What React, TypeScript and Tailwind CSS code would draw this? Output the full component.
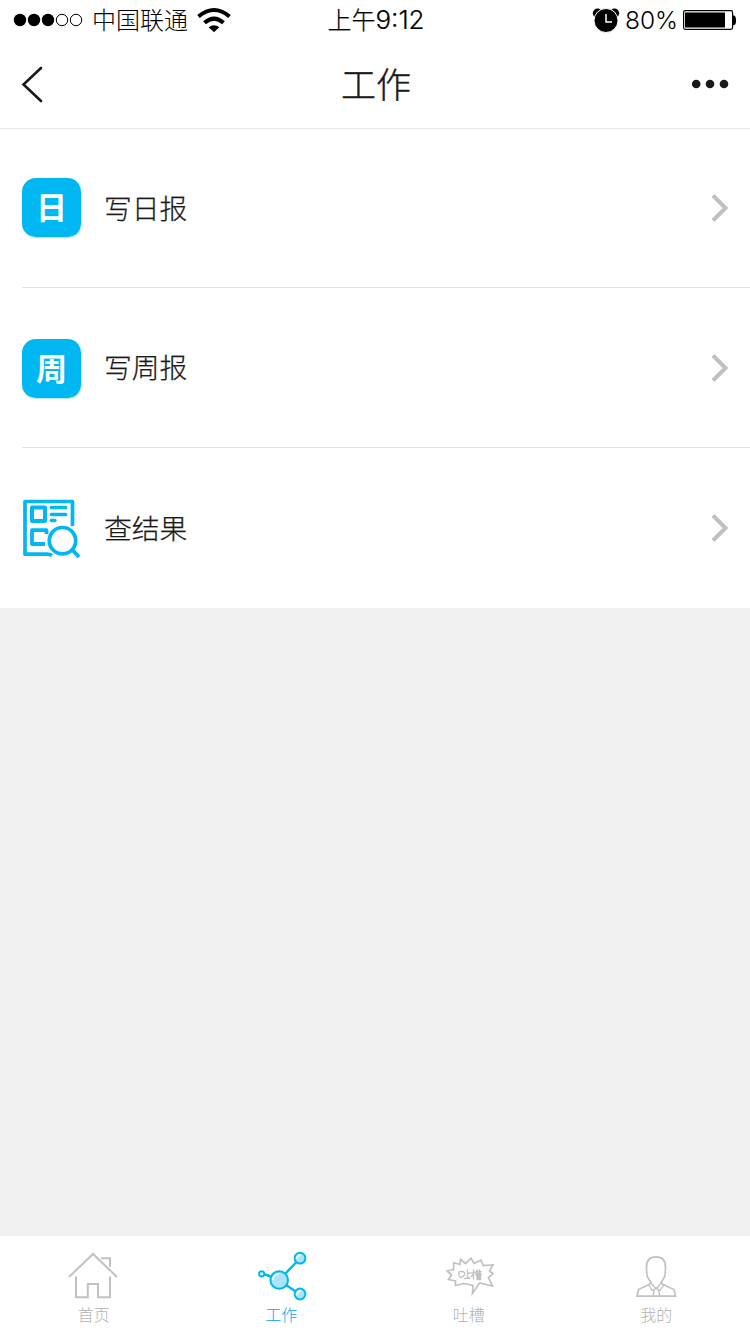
import React from 'react';

interface MenuItem {
  label: string;
  icon: React.ReactNode;
}

interface TabItem {
  label: string;
  icon: React.ReactNode;
  active?: boolean;
}

const CharIcon: React.FC<{ char: string; className?: string }> = ({ char, className = '' }) => (
  <div
    className={`flex h-[60px] w-[60px] items-center justify-center rounded-[14px] border-r border-b border-[#b5eafb] bg-[#00b7f1] bg-clip-padding pb-[4px] text-[31px] leading-none font-bold text-white ${className}`}
  >
    {char}
  </div>
);

const SearchResultIcon = () => (
  <svg width="60" height="62" viewBox="22 497 60 62" fill="none" stroke="#00b7f1">
    <path d="M72.500 526V501.500H25V554.200H47Q50 554.200 52 555.500" strokeWidth="3.700" strokeLinejoin="round" />
    <rect x="32" y="507.500" width="13" height="13.500" strokeWidth="4" strokeLinejoin="round" />
    <path d="M51.300 507.500H65.700M51.300 514.500H65.700M51.300 520.500H55" strokeWidth="3.400" strokeLinecap="round" />
    <path d="M46.500 534V530.200H32V544H45" strokeWidth="3.800" strokeLinejoin="round" />
    <circle cx="62.500" cy="540.700" r="13.200" strokeWidth="3.700" />
    <path d="M72 549.500L79 557" strokeWidth="4" />
  </svg>
);

const WifiIcon = () => (
  <svg width="34" height="26" viewBox="197 7 34 26" fill="none" stroke="#000">
    <path d="M198.500 16.500Q214 3.500 229.500 16.500" strokeWidth="4" />
    <path d="M204.500 22.800Q214 14.500 223.500 22.800" strokeWidth="4" />
    <path d="M208.700 27.200Q214 23.200 219.300 27.200L214 32.300Z" fill="#000" stroke="none" />
  </svg>
);

const AlarmIcon = () => (
  <svg width="28" height="26" viewBox="593 7 28 26">
    <circle cx="598.500" cy="13.200" r="4.700" />
    <circle cx="615.500" cy="13.200" r="4.700" />
    <circle cx="607" cy="20.500" r="12" stroke="#fff" strokeWidth="1" />
    <path d="M607 14V22H613" fill="none" stroke="#fff" strokeWidth="1.500" />
  </svg>
);

const BatteryIcon = () => (
  <svg width="54" height="20" viewBox="683 10 54 20">
    <rect x="683.600" y="10.600" width="49" height="18.800" rx="1.800" fill="#fff" stroke="#000" strokeWidth="1.200" />
    <rect x="685" y="12.500" width="40" height="15" />
    <path d="M733 15.500H734Q736 16 736 20.500T734 25H733Z" />
  </svg>
);

const HomeIcon = () => (
  <svg width="52" height="48" viewBox="68 1251 52 48" fill="none" stroke="#c1c1c1" strokeWidth="2">
    <path d="M69 1276L93 1253L117 1276" />
    <path d="M101 1257.200H110V1266" />
    <path d="M76 1275.500V1296.200H87.800V1283H98V1296.200H110V1275.500" />
  </svg>
);

const WorkIcon = () => (
  <svg width="50" height="50" viewBox="256 1251 50 50" fill="none" stroke="#00b7ee" strokeWidth="2" className="overflow-visible">
    <path d="M285 1274L296 1262.500M286 1285L295 1291M265 1274.500L271 1276.500" strokeWidth="2.400" />
    <circle cx="261.700" cy="1273.800" r="2.600" />
    <circle cx="279.200" cy="1280" r="8.800" fill="#a9e4fa" />
    <path d="M272.800 1280Q273.500 1274.500 279 1273.700" stroke="#fff" strokeWidth="1.500" />
    <circle cx="300" cy="1258.200" r="5.400" fill="#a9e4fa" />
    <path d="M296.500 1259Q297 1255.500 300.500 1255" stroke="#fff" strokeWidth="1.800" />
    <circle cx="300" cy="1294" r="5.400" fill="#a9e4fa" />
    <path d="M296.500 1295Q297 1291.500 300.500 1291" stroke="#fff" strokeWidth="1.800" />
  </svg>
);

const RoastIcon = () => (
  <svg width="50" height="42" viewBox="444 1255 50 42" fill="none" stroke="#c1c1c1" strokeWidth="1.700" className="overflow-visible">
    <path d="M447 1271L453.500 1269.500L453.800 1262.800L460 1264.500L460.500 1259.500L465.500 1263.500L471 1258.200L474 1263.500L481 1260.200L483.300 1265.500L493 1265L489.500 1271L493 1273.500L488.500 1278L492.500 1286L479.500 1283L472.500 1293.500L473 1285.500L464 1283.500L455.500 1285.500L455.500 1281L448.500 1279.500L451.500 1275Z" />
    <g strokeWidth="1.300" strokeLinecap="round">
      <path d="M459 1273.500Q458 1271 462 1271.500Q466 1272 464 1275.500Q461 1279 459 1276ZM467.500 1270V1278M467.500 1273.500L470 1273M464.500 1278.500L470 1278" />
      <path d="M471.500 1273L475 1272.500M473.500 1270V1279M473.500 1274L471.500 1276.500M476 1271.500H481M477 1270V1275M479.500 1270V1275M476 1273.500H481V1275H476ZM477 1276.500H480.500V1279.500H477ZM477 1278H480" />
    </g>
  </svg>
);

const ProfileIcon = () => (
  <svg width="42" height="44" viewBox="635 1254 42 44" fill="none" stroke="#c1c1c1" strokeWidth="1.700">
    <path d="M651.500 1283.500L647.500 1277Q646.500 1274 646.500 1267C646.500 1260 650.500 1256.800 656 1256.800S665.500 1260 665.500 1267Q665.500 1274 664.500 1277L660.500 1283.500" />
    <path d="M650 1284L638.500 1289.500L637 1296.200H675.500L674 1289.500L662 1284" />
    <path d="M650.500 1283L656.200 1288.500L661.500 1283L663.500 1285.500L660 1290.500L656.200 1288.500L652 1290.500L648.800 1285ZM654.500 1289L653 1296M658 1289L660 1296" strokeWidth="1.300" />
  </svg>
);

const Chevron = () => (
  <svg width="18" height="30" viewBox="711 193 18 30" fill="none" stroke="#c0c0c0" strokeWidth="4">
    <path d="M713 195.500L725.500 208L713 220.500" />
  </svg>
);

const menuItems: MenuItem[] = [
  { label: '写日报', icon: <CharIcon char="日" /> },
  { label: '写周报', icon: <CharIcon char="周" className="mt-[2px]" /> },
  { label: '查结果', icon: <SearchResultIcon /> },
];

const tabs: TabItem[] = [
  { label: '首页', icon: <HomeIcon /> },
  { label: '工作', icon: <WorkIcon />, active: true },
  { label: '吐槽', icon: <RoastIcon /> },
  { label: '我的', icon: <ProfileIcon /> },
];

const StatusBar = () => (
  <div className="grid h-10 grid-cols-[1fr_auto_1fr] items-center text-[24px] leading-none font-light text-black">
    <div className="flex items-center pl-[13px]">
      <svg width="70" height="14" viewBox="13 13 70 14">
        <circle cx="20" cy="20" r="6.200" />
        <circle cx="34" cy="20" r="6.200" />
        <circle cx="48" cy="20" r="6.200" />
        <circle cx="62" cy="20" r="5.700" fill="none" stroke="#000" />
        <circle cx="76" cy="20" r="5.700" fill="none" stroke="#000" />
      </svg>
      <span className="ml-[9px] pb-[2px]">中国联通</span>
      <div className="ml-[9px]">
        <WifiIcon />
      </div>
    </div>
    <div className="flex items-center pl-[2px]">
      <span className="pb-[2px] [-webkit-text-stroke:0.2px]">上午</span>
      <span className="font-['Inter'] text-[26px] font-light [-webkit-text-stroke:0.2px]">9:12</span>
    </div>
    <div className="flex items-center justify-end pr-[13px]">
      <AlarmIcon />
      <span className="mr-[5px] ml-[5px] font-['Inter'] text-[24.500px]">80%</span>
      <BatteryIcon />
    </div>
  </div>
);

const App: React.FC = () => {
  return (
    <div className="flex h-[1334px] w-[750px] flex-col bg-[#f0f0f0] font-['Noto_Sans_CJK_SC',sans-serif] text-[#1a1a1a]">
      <header className="h-[129px] border-b border-[#e6e6e6] bg-white">
        <StatusBar />
        <div className="grid h-[88px] grid-cols-3 items-center px-[21px]">
          <svg width="23" height="38" viewBox="21 65 23 38" fill="none" stroke="#1a1a1a" strokeWidth="2.600" strokeLinecap="round">
            <path d="M41 68L23.500 84.500L41 101" />
          </svg>
          <h1 className="pb-[3px] pl-[2px] text-center text-[35px] leading-none font-light [-webkit-text-stroke:0.4px]">
            工作
          </h1>
          <svg className="justify-self-end" width="38" height="10" viewBox="691 79 38 10" fill="#1a1a1a">
            <circle cx="696.200" cy="84" r="4.300" />
            <circle cx="710" cy="84" r="4.300" />
            <circle cx="724" cy="84" r="4.300" />
          </svg>
        </div>
      </header>

      <main className="flex-1">
        <div className="bg-white pl-[22px]">
          {menuItems.map((item, index) => (
            <div
              key={item.label}
              className={`flex items-center pr-[21px] ${index === 0 ? 'h-[159px]' : 'h-[160px]'} ${
                index < menuItems.length - 1 ? 'border-b border-[#e2e2e2]' : ''
              }`}
            >
              {item.icon}
              <span className="ml-[22px] flex-1 pb-px text-[27.800px] leading-none font-light [-webkit-text-stroke:0.25px]">
                {item.label}
              </span>
              <Chevron />
            </div>
          ))}
        </div>
      </main>

      <nav className="grid h-[98px] grid-cols-4 bg-white">
        {tabs.map((tab) => (
          <div key={tab.label} className="flex flex-col items-center pt-[14px]">
            <div className="flex h-[52px] items-center">{tab.icon}</div>
            <span
              className={`mt-[4px] text-[16px] leading-none font-light ${
                tab.active ? 'text-[#00a8e8]' : 'text-[#b2b2b2]'
              }`}
            >
              {tab.label}
            </span>
          </div>
        ))}
      </nav>
    </div>
  );
};

export default App;
